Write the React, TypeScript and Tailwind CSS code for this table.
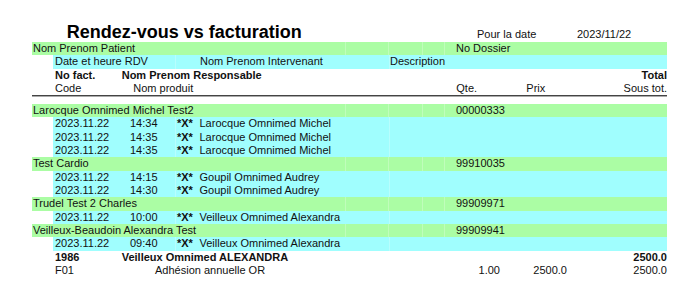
import React from 'react';

type Visit = { date: string; time: string; who: string };
type Patient = { name: string; dossier: string; visits: Visit[] };

const patients: Patient[] = [
  {
    name: 'Larocque Omnimed Michel Test2',
    dossier: '00000333',
    visits: [
      { date: '2023.11.22', time: '14:34', who: 'Larocque Omnimed Michel' },
      { date: '2023.11.22', time: '14:35', who: 'Larocque Omnimed Michel' },
      { date: '2023.11.22', time: '14:35', who: 'Larocque Omnimed Michel' },
    ],
  },
  {
    name: 'Test Cardio',
    dossier: '99910035',
    visits: [
      { date: '2023.11.22', time: '14:15', who: 'Goupil Omnimed Audrey' },
      { date: '2023.11.22', time: '14:30', who: 'Goupil Omnimed Audrey' },
    ],
  },
  {
    name: 'Trudel Test 2 Charles',
    dossier: '99909971',
    visits: [{ date: '2023.11.22', time: '10:00', who: 'Veilleux Omnimed Alexandra' }],
  },
  {
    name: 'Veilleux-Beaudoin Alexandra Test',
    dossier: '99909941',
    visits: [{ date: '2023.11.22', time: '09:40', who: 'Veilleux Omnimed Alexandra' }],
  },
];

const row = 'flex h-[13.33px] leading-[13.33px] whitespace-nowrap';
const green = 'bg-[#abfda4]';
const cyan = 'bg-[#a0fefe]';
const seam = 'border-l border-white/25';

// patient band: name on the left, dossier number on the right
const PatientRow: React.FC<{ name: string; dossier: string }> = ({ name, dossier }) => (
  <div className={`${row} ${green} w-[635px]`}>
    <div className="w-[313px] pl-[1px]">{name}</div>
    <div className={`w-[43px] ${seam}`} />
    <div className={`w-[34px] ${seam}`} />
    <div className={`w-[22px] ${seam}`} />
    <div className={`flex-1 pl-[11px] ${seam}`}>{dossier}</div>
  </div>
);

const VisitRow: React.FC<{ v: Visit }> = ({ v }) => (
  <div className={`${row} ${cyan} ml-[21px] w-[614px]`}>
    <div className="flex w-[122px] pl-[2px]">
      <span className="w-[75px]">{v.date}</span>
      <span>{v.time}</span>
    </div>
    <div className={`flex w-[214px] pl-[1px] ${seam}`}>
      <span className="w-[22.5px] font-bold">*X*</span>
      <span>{v.who}</span>
    </div>
    <div className={`flex-1 ${seam}`} />
  </div>
);

export default function App() {
  return (
    <div
      className="w-[688px] h-[297px] bg-white text-[#111] text-[11px] overflow-hidden"
      style={{ fontFamily: '"Liberation Sans", Arial, sans-serif' }}
    >
      <div className="pl-[32px] w-[667px]">
        {/* title */}
        <div className="flex items-baseline h-[42px] pt-[23px] whitespace-nowrap">
          <span className="ml-[34.7px] w-[410.3px] text-[18px] leading-[18px] font-bold text-black">
            Rendez-vous vs facturation
          </span>
          <span className="w-[100px]">Pour la date</span>
          <span>2023/11/22</span>
        </div>

        {/* column headers */}
        <div className={`${row} ${green} w-[635px]`}>
          <div className="w-[313px] pl-[1px]">Nom Prenom Patient</div>
          <div className={`w-[43px] ${seam}`} />
          <div className={`w-[34px] ${seam}`} />
          <div className={`w-[22px] ${seam}`} />
          <div className={`flex-1 pl-[11px] ${seam}`}>No Dossier</div>
        </div>
        <div className={`${row} ${cyan} ml-[21px] w-[614px]`}>
          <div className="w-[122px] pl-[2px]">Date et heure RDV</div>
          <div className={`w-[214px] pl-[24px] ${seam}`}>Nom Prenom Intervenant</div>
          <div className={`flex-1 ${seam}`}>Description</div>
        </div>
        <div className={`${row} font-bold w-[635px]`}>
          <span className="ml-[23px] w-[66.7px]">No fact.</span>
          <span>Nom Prenom Responsable</span>
          <span className="ml-auto">Total</span>
        </div>
        <div className={`${row} w-[635px]`}>
          <span className="ml-[23px] w-[78.3px]">Code</span>
          <span className="w-[323px]">Nom produit</span>
          <span className="w-[70px]">Qte.</span>
          <span>Prix</span>
          <span className="ml-auto">Sous tot.</span>
        </div>
        <div className="w-[635px] border-t border-[#444] border-b border-b-[#aaa] mb-[6.7px]" />

        {/* patients and visits */}
        {patients.map((p) => (
          <React.Fragment key={p.dossier}>
            <PatientRow name={p.name} dossier={p.dossier} />
            {p.visits.map((v, i) => (
              <VisitRow key={i} v={v} />
            ))}
          </React.Fragment>
        ))}

        {/* invoice */}
        <div className={`${row} font-bold w-[635px]`}>
          <span className="ml-[23px] w-[66.7px]">1986</span>
          <span>Veilleux Omnimed ALEXANDRA</span>
          <span className="ml-auto">2500.0</span>
        </div>
        <div className={`${row} w-[635px]`}>
          <span className="ml-[23px] w-[100px]">F01</span>
          <span className="w-[300px]">Adhésion annuelle OR</span>
          <span className="w-[45px] text-right">1.00</span>
          <span className="w-[67px] text-right">2500.0</span>
          <span className="ml-auto">2500.0</span>
        </div>
      </div>
    </div>
  );
}
